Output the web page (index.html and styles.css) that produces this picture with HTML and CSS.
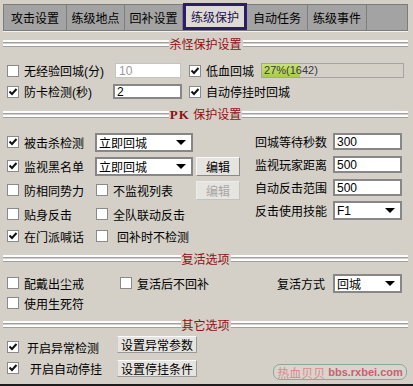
FILE: index.html
```html
<!DOCTYPE html>
<html lang="zh-CN">
<head>
    <meta charset="UTF-8">
    <title>练级保护</title>
    <link rel="stylesheet" href="styles.css">
</head>
<body>
<div class="window">

    <!-- Tabs -->
    <div class="tabs">
        <div class="tab t1">攻击设置</div>
        <div class="tab t2">练级地点</div>
        <div class="tab t3">回补设置</div>
        <div class="tab t4 active">练级保护</div>
        <div class="tab t5">自动任务</div>
        <div class="tab t6">练级事件</div>
        <div class="tab-fill"></div>
    </div>

    <!-- 杀怪保护设置 -->
    <div class="group-title first"><span class="rule"></span><span class="title">杀怪保护设置</span><span class="rule"></span></div>
    <div class="kill-grid">
        <label class="check"><span class="box"></span>无经验回城(分)</label>
        <div class="edit disabled e-exp">10</div>
        <div class="hp-cell">
            <label class="check"><span class="box on"><svg viewBox="0 0 10 10"><polyline points="1.5,4.5 4,7 8.5,2"/></svg></span>低血回城</label>
            <div class="progress"><div class="fill" style="width: 27%"></div><span class="ptext">27%(1642)</span></div>
        </div>
        <label class="check"><span class="box on"><svg viewBox="0 0 10 10"><polyline points="1.5,4.5 4,7 8.5,2"/></svg></span>防卡检测(秒)</label>
        <div class="edit e-stuck">2</div>
        <label class="check"><span class="box on"><svg viewBox="0 0 10 10"><polyline points="1.5,4.5 4,7 8.5,2"/></svg></span>自动停挂时回城</label>
    </div>

    <!-- PK 保护设置 -->
    <div class="group-title"><span class="rule"></span><span class="title"><b class="pk">PK</b> 保护设置</span><span class="rule"></span></div>
    <div class="pk-section">
        <div class="pk-left">
            <label class="check"><span class="box on"><svg viewBox="0 0 10 10"><polyline points="1.5,4.5 4,7 8.5,2"/></svg></span>被击杀检测</label>
            <div class="combo c-wide"><span>立即回城</span><svg class="arrow" viewBox="0 0 10 5"><polygon points="0,0 10,0 5,5"/></svg></div>
            <div></div>

            <label class="check"><span class="box on"><svg viewBox="0 0 10 10"><polyline points="1.5,4.5 4,7 8.5,2"/></svg></span>监视黑名单</label>
            <div class="combo c-wide"><span>立即回城</span><svg class="arrow" viewBox="0 0 10 5"><polygon points="0,0 10,0 5,5"/></svg></div>
            <div class="btn small">编辑</div>

            <label class="check"><span class="box"></span>防相同势力</label>
            <label class="check mid"><span class="box"></span>不监视列表</label>
            <div class="btn small disabled">编辑</div>

            <label class="check"><span class="box"></span>贴身反击</label>
            <label class="check mid"><span class="box"></span>全队联动反击</label>
            <div></div>

            <label class="check"><span class="box on"><svg viewBox="0 0 10 10"><polyline points="1.5,4.5 4,7 8.5,2"/></svg></span>在门派喊话</label>
            <label class="check mid wide-gap"><span class="box"></span>回补时不检测</label>
            <div></div>
        </div>
        <div class="pk-right">
            <span class="lbl">回城等待秒数</span><div class="edit num">300</div>
            <span class="lbl">监视玩家距离</span><div class="edit num">500</div>
            <span class="lbl">自动反击范围</span><div class="edit num">500</div>
            <span class="lbl">反击使用技能</span>
            <div class="combo"><span>F1</span><svg class="arrow" viewBox="0 0 10 5"><polygon points="0,0 10,0 5,5"/></svg></div>
        </div>
    </div>

    <!-- 复活选项 -->
    <div class="group-title"><span class="rule"></span><span class="title">复活选项</span><span class="rule"></span></div>
    <div class="revive-grid">
        <label class="check"><span class="box"></span>配戴出尘戒</label>
        <label class="check"><span class="box"></span>复活后不回补</label>
        <span class="lbl">复活方式</span>
        <div class="combo"><span>回城</span><svg class="arrow" viewBox="0 0 10 5"><polygon points="0,0 10,0 5,5"/></svg></div>
        <label class="check"><span class="box"></span>使用生死符</label>
    </div>

    <!-- 其它选项 -->
    <div class="group-title"><span class="rule"></span><span class="title">其它选项</span><span class="rule"></span></div>
    <div class="other-grid">
        <label class="check g8"><span class="box on"><svg viewBox="0 0 10 10"><polyline points="1.5,4.5 4,7 8.5,2"/></svg></span>开启异常检测</label>
        <div class="btn wide top">设置异常参数</div>
        <label class="check g11"><span class="box on"><svg viewBox="0 0 10 10"><polyline points="1.5,4.5 4,7 8.5,2"/></svg></span>开启自动停挂</label>
        <div class="btn wide">设置停挂条件</div>
    </div>

    <div class="watermark"><span class="wm-cn">热血贝贝</span> <b class="wm-url">bbs.rxbei.com</b></div>
</div>
</body>
</html>
```

FILE: styles.css
```css
* { box-sizing: border-box; }
body { margin: 0; background: #d4d0c8; font-family: "Liberation Sans", "Noto Sans CJK SC", sans-serif; font-size: 12px; color: #000; }
.window { position: relative; width: 413px; height: 386px; border-bottom: 2px solid #1c1c1c; overflow: hidden; }

/* tabs */
.tabs { display: flex; height: 27px; margin: 4px 5px 0 3px; background: #a3a3a3; border: 1px solid #7c7c7c; box-shadow: 0 1px 0 #f2f2f2; }
.tab { display: flex; align-items: center; justify-content: center; height: 25px; font-size: 12px; border-right: 1px solid #7e7e7e; }
.t1 { width: 63px; }
.t2, .t3 { width: 58px; }
.t4 { width: 64px; }
.t5 { width: 61px; }
.t6 { width: 59px; }
.tab-fill { flex: 1; }
.tab.active { height: 27px; margin-top: -2px; background: #dedbd4; color: #1d1058; border: 3px solid #2b1c6c; }

/* group titles */
.group-title { display: flex; align-items: center; height: 16px; margin: 4px 5px 0 3px; color: #8e1212; }
.group-title .rule { flex: 1; height: 7px; background: linear-gradient(#fdfdfd 0 2px, #a0a0a0 2px 3px, transparent 3px 4px, #fdfdfd 4px 6px, #a0a0a0 6px 7px); }
.group-title .title { padding: 0 1px; white-space: nowrap; }
.pk { font-family: "Liberation Serif", serif; font-size: 13px; letter-spacing: 1px; }

/* checkbox */
.check { display: flex; align-items: center; white-space: nowrap; }
.box { flex: none; width: 12px; height: 12px; margin-right: 5px; background: #fff; border: 1px solid #8a8a8a; display: flex; align-items: center; justify-content: center; }
.box svg { width: 10px; height: 10px; fill: none; stroke: #111; stroke-width: 2; }
.check.mid { margin-left: 1px; }
.check.wide-gap .box { margin-right: 9px; }
.check.g8 .box { margin-right: 8px; }
.check.g11 .box { margin-right: 11px; }

/* edits and combos */
.edit { display: flex; align-items: center; height: 17px; padding-left: 2px; background: #fff; border: 2px solid #878787; }
.edit.disabled { color: #9a9a9a; border: 1px solid #c4c4c4; padding-left: 3px; }
.e-exp { width: 66px; height: 15px; margin-left: 2px; }
.e-stuck { width: 69px; height: 15px; }
.combo { display: flex; align-items: center; justify-content: space-between; height: 19px; padding: 0 5px 0 2px; background: #fff; border: 2px solid #878787; }
.combo .arrow { width: 10px; height: 5px; fill: #000; }
.c-wide { width: 98px; }

/* buttons */
.btn { display: flex; align-items: center; justify-content: center; background: #e6e4df; border: 1px solid; border-color: #f8f8f8 #8a8a8a #8a8a8a #f8f8f8; }
.btn.small { width: 44px; height: 19px; }
.btn.disabled { color: #a6a6a6; border-color: #ececec #c2c2c2 #c2c2c2 #ececec; }
.btn.wide { width: 80px; height: 17px; border-color: #fafafa #9a9a9a #9a9a9a #cfcfcf; }
.btn.top { align-self: start; }

/* 杀怪保护 */
.kill-grid { display: grid; grid-template-columns: 106px 76px 1fr; grid-auto-rows: 21px; align-items: center; margin-top: 9px; padding-left: 7px; }
.hp-cell { display: flex; align-items: center; }
.progress { position: relative; width: 143px; height: 15px; margin-left: 7px; background: #d4d0c8; border: 1px solid #a4a4a4; }
.progress .fill { height: 100%; background: linear-gradient(#c9e27a, #a8cc48); }
.progress .ptext { position: absolute; left: 2px; top: 0; line-height: 13px; font-size: 11px; color: #3a3a3a; }

/* PK */
.pk-section { display: flex; margin-top: 8px; }
.pk-left { display: grid; grid-template-columns: 88px 101px 44px; grid-template-rows: 24px 24px 24px 24px 20px; align-items: center; padding-left: 7px; }
.pk-right { display: grid; grid-template-columns: 78px 69px; grid-auto-rows: 23px; align-content: start; align-items: center; margin-left: 15px; }

/* 复活 */
.revive-grid { display: grid; grid-template-columns: 113px 157px 56px 69px; grid-template-rows: 22px 18px; align-items: center; margin-top: 6px; padding-left: 7px; }

/* 其它 */
.other-grid { display: grid; grid-template-columns: 110px 80px; grid-template-rows: 22px 20px; align-items: center; margin-top: 4px; padding-left: 7px; }

/* watermark */
.watermark { position: absolute; right: 6px; bottom: 4px; width: 134px; height: 16px; display: flex; align-items: center; justify-content: center; gap: 3px; border: 1px solid #8ea897; border-radius: 7px; background: rgba(255, 255, 255, 0.12); }
.wm-cn { font-size: 12px; color: #d98a8a; }
.wm-url { font-size: 11px; color: #c9606c; }
```
